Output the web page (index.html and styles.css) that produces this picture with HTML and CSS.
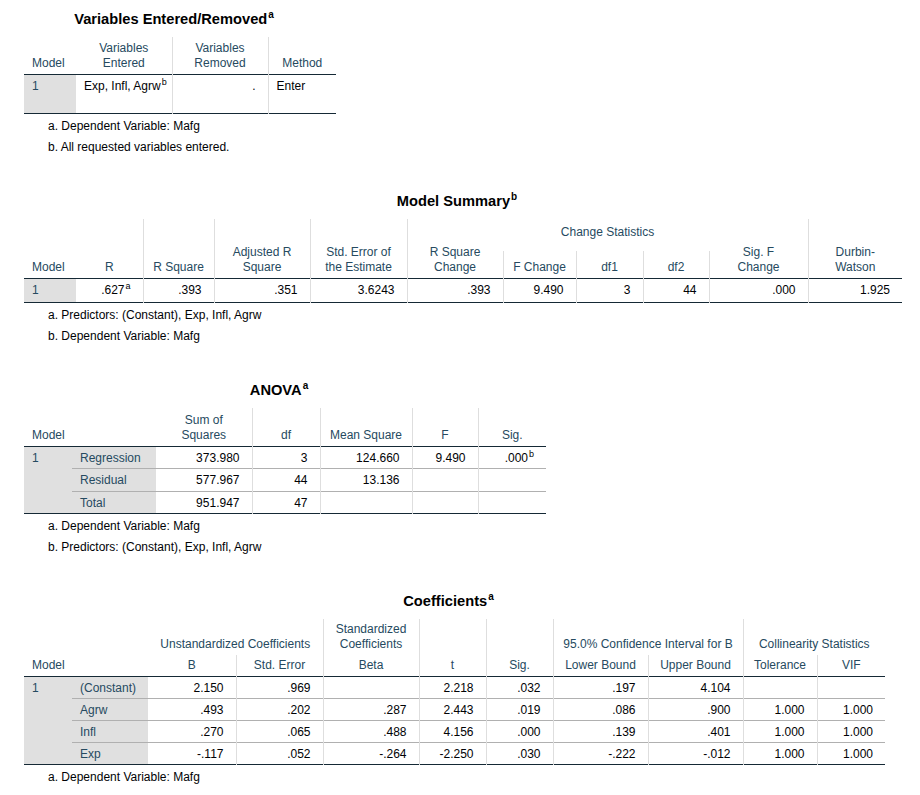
FILE: index.html
```html
<!DOCTYPE html>
<html>
<head>
<meta charset="utf-8">
<title>Regression Output</title>
<link rel="stylesheet" href="styles.css">
</head>
<body>
<div class="page">

  <section class="block">
    <div class="title">Variables Entered/Removed<sup>a</sup></div>
    <table class="spss t1">
      <colgroup><col class="w52"><col class="w96"><col class="w96"><col class="w68"></colgroup>
      <thead>
        <tr class="h37">
          <th class="hmodel">Model</th>
          <th>Variables<br>Entered</th>
          <th>Variables<br>Removed</th>
          <th class="end">Method</th>
        </tr>
      </thead>
      <tbody>
        <tr class="h39">
          <td class="rh">1</td>
          <td class="txt">Exp, Infl, Agrw<sup class="fn">b</sup></td>
          <td class="num">.</td>
          <td class="txt end">Enter</td>
        </tr>
      </tbody>
    </table>
    <div class="notes">
      <div class="note">a. Dependent Variable: Mafg</div>
      <div class="note">b. All requested variables entered.</div>
    </div>
  </section>

  <section class="block">
    <div class="title">Model Summary<sup>b</sup></div>
    <table class="spss t2">
      <colgroup>
        <col class="w52"><col class="w67"><col class="w71"><col class="w96"><col class="w97">
        <col class="w96"><col class="w73"><col class="w67"><col class="w66"><col class="w99"><col class="w94">
      </colgroup>
      <thead>
        <tr class="h32">
          <th class="hmodel" rowspan="2">Model</th>
          <th rowspan="2">R</th>
          <th rowspan="2">R Square</th>
          <th rowspan="2">Adjusted R<br>Square</th>
          <th rowspan="2">Std. Error of<br>the Estimate</th>
          <th colspan="5" class="group-hi">Change Statistics</th>
          <th rowspan="2" class="end">Durbin-<br>Watson</th>
        </tr>
        <tr class="h27">
          <th><span class="up">R Square<br>Change</span></th>
          <th>F Change</th>
          <th>df1</th>
          <th>df2</th>
          <th><span class="up">Sig. F<br>Change</span></th>
        </tr>
      </thead>
      <tbody>
        <tr class="h24">
          <td class="rh">1</td>
          <td class="num">.627<sup class="fn">a</sup></td>
          <td class="num">.393</td>
          <td class="num">.351</td>
          <td class="num">3.6243</td>
          <td class="num">.393</td>
          <td class="num">9.490</td>
          <td class="num">3</td>
          <td class="num">44</td>
          <td class="num">.000</td>
          <td class="num end">1.925</td>
        </tr>
      </tbody>
    </table>
    <div class="notes">
      <div class="note">a. Predictors: (Constant), Exp, Infl, Agrw</div>
      <div class="note">b. Dependent Variable: Mafg</div>
    </div>
  </section>

  <section class="block">
    <div class="title">ANOVA<sup>a</sup></div>
    <table class="spss t3">
      <colgroup>
        <col class="w48"><col class="w84"><col class="w96"><col class="w68"><col class="w92"><col class="w66"><col class="w68">
      </colgroup>
      <thead>
        <tr class="h39">
          <th class="hmodel" colspan="2">Model</th>
          <th>Sum of<br>Squares</th>
          <th>df</th>
          <th>Mean Square</th>
          <th>F</th>
          <th class="end">Sig.</th>
        </tr>
      </thead>
      <tbody>
        <tr class="h22">
          <td class="rh" rowspan="3">1</td>
          <td class="rh lbl">Regression</td>
          <td class="num">373.980</td>
          <td class="num">3</td>
          <td class="num">124.660</td>
          <td class="num">9.490</td>
          <td class="num end">.000<sup class="fn">b</sup></td>
        </tr>
        <tr class="h23">
          <td class="rh lbl">Residual</td>
          <td class="num">577.967</td>
          <td class="num">44</td>
          <td class="num">13.136</td>
          <td class="num"></td>
          <td class="num end"></td>
        </tr>
        <tr class="h22">
          <td class="rh lbl">Total</td>
          <td class="num">951.947</td>
          <td class="num">47</td>
          <td class="num"></td>
          <td class="num"></td>
          <td class="num end"></td>
        </tr>
      </tbody>
    </table>
    <div class="notes">
      <div class="note">a. Dependent Variable: Mafg</div>
      <div class="note">b. Predictors: (Constant), Exp, Infl, Agrw</div>
    </div>
  </section>

  <section class="block">
    <div class="title">Coefficients<sup>a</sup></div>
    <table class="spss t4">
      <colgroup>
        <col class="w48"><col class="w76"><col class="w88"><col class="w87"><col class="w96"><col class="w67">
        <col class="w67"><col class="w95"><col class="w95"><col class="w74"><col class="w68">
      </colgroup>
      <thead>
        <tr class="h36">
          <th class="hmodel" colspan="2" rowspan="2">Model</th>
          <th colspan="2">Unstandardized Coefficients</th>
          <th>Standardized<br>Coefficients</th>
          <th rowspan="2">t</th>
          <th rowspan="2">Sig.</th>
          <th colspan="2">95.0% Confidence Interval for B</th>
          <th colspan="2" class="end">Collinearity Statistics</th>
        </tr>
        <tr class="h21">
          <th>B</th>
          <th>Std. Error</th>
          <th>Beta</th>
          <th>Lower Bound</th>
          <th>Upper Bound</th>
          <th>Tolerance</th>
          <th class="end">VIF</th>
        </tr>
      </thead>
      <tbody>
        <tr class="h22">
          <td class="rh" rowspan="4">1</td>
          <td class="rh lbl">(Constant)</td>
          <td class="num">2.150</td>
          <td class="num">.969</td>
          <td class="num"></td>
          <td class="num">2.218</td>
          <td class="num">.032</td>
          <td class="num">.197</td>
          <td class="num">4.104</td>
          <td class="num"></td>
          <td class="num end"></td>
        </tr>
        <tr class="h22">
          <td class="rh lbl">Agrw</td>
          <td class="num">.493</td>
          <td class="num">.202</td>
          <td class="num">.287</td>
          <td class="num">2.443</td>
          <td class="num">.019</td>
          <td class="num">.086</td>
          <td class="num">.900</td>
          <td class="num">1.000</td>
          <td class="num end">1.000</td>
        </tr>
        <tr class="h22">
          <td class="rh lbl">Infl</td>
          <td class="num">.270</td>
          <td class="num">.065</td>
          <td class="num">.488</td>
          <td class="num">4.156</td>
          <td class="num">.000</td>
          <td class="num">.139</td>
          <td class="num">.401</td>
          <td class="num">1.000</td>
          <td class="num end">1.000</td>
        </tr>
        <tr class="h22">
          <td class="rh lbl">Exp</td>
          <td class="num">-.117</td>
          <td class="num">.052</td>
          <td class="num">-.264</td>
          <td class="num">-2.250</td>
          <td class="num">.030</td>
          <td class="num">-.222</td>
          <td class="num">-.012</td>
          <td class="num">1.000</td>
          <td class="num end">1.000</td>
        </tr>
      </tbody>
    </table>
    <div class="notes">
      <div class="note">a. Dependent Variable: Mafg</div>
    </div>
  </section>

</div>
</body>
</html>
```
FILE: styles.css
```css
* { box-sizing: border-box; }

html, body {
  margin: 0;
  background: #ffffff;
}

body {
  font-family: "Liberation Sans", Arial, sans-serif;
  font-size: 12px;
  color: #010205;
}

.page {
  padding: 9px 0 0 24px;
  display: flex;
  flex-direction: column;
  align-items: flex-start;
  gap: 33px;
}

.block {
  display: flex;
  flex-direction: column;
}

.title {
  font-size: 14.67px;
  font-weight: bold;
  color: #000000;
  line-height: 20px;
  height: 20px;
  text-align: center;
  padding-right: 12px;
  margin-bottom: 8px;
  white-space: nowrap;
}

.title sup {
  font-size: 10px;
  line-height: 0;
  vertical-align: 6px;
  margin-left: 1px;
}

/* ---------- SPSS pivot table ---------- */
.spss {
  border-collapse: collapse;
  table-layout: fixed;
}

.t1 { width: 312px; }
.t2 { width: 878px; }
.t3 { width: 522px; }
.t4 { width: 861px; }

.w48 { width: 48px; }
.w52 { width: 52px; }
.w66 { width: 66px; }
.w67 { width: 67px; }
.w68 { width: 68px; }
.w71 { width: 71px; }
.w73 { width: 73px; }
.w74 { width: 74px; }
.w76 { width: 76px; }
.w84 { width: 84px; }
.w87 { width: 87px; }
.w88 { width: 88px; }
.w92 { width: 92px; }
.w94 { width: 94px; }
.w95 { width: 95px; }
.w96 { width: 96px; }
.w97 { width: 97px; }
.w99 { width: 99px; }

.h21 { height: 21px; }
.h22 { height: 22px; }
.h23 { height: 23px; }
.h24 { height: 24px; }
.h27 { height: 27px; }
.h32 { height: 32px; }
.h36 { height: 36px; }
.h37 { height: 37px; }
.h39 { height: 39px; }

.spss th,
.spss td {
  line-height: 15px;
  white-space: nowrap;
  padding: 0 12px 0 8px;
}

.spss th {
  font-weight: normal;
  color: #264a60;
  text-align: center;
  vertical-align: bottom;
  padding: 0 4px 3px 4px;
  border-right: 1px solid #dedede;
}

.spss th .up {
  display: block;
  margin-top: -6px;
}

.spss th.hmodel {
  text-align: left;
  padding-left: 8px;
  border-right: none;
}

.spss th.group-hi {
  padding-bottom: 11px;
}

.spss tbody {
  border-top: 1px solid #152935;
  border-bottom: 1px solid #152935;
}

.spss td {
  vertical-align: top;
  padding-top: 4px;
  border-right: 1px solid #dedede;
}

.spss tbody tr + tr td {
  border-top: 1px solid #b0b0b0;
}

.spss td.rh {
  background: #e0e0e0;
  color: #264a60;
  text-align: left;
  border-right: none;
}

.spss td.lbl {
  padding-left: 8px;
}

.spss td.num {
  text-align: right;
}

.spss td.txt {
  text-align: left;
}

.spss .end {
  border-right: none;
}

sup.fn {
  font-size: 9px;
  line-height: 0;
  vertical-align: 5px;
  margin-left: 1px;
}

/* ---------- footnotes ---------- */
.notes {
  margin-top: 2px;
  padding-left: 24px;
}

.note {
  line-height: 21px;
  height: 21px;
  white-space: nowrap;
}
```
